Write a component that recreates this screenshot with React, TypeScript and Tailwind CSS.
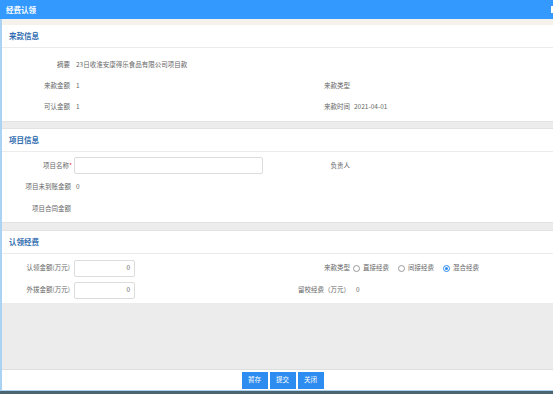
import React from "react";

const font = { fontFamily: '"Noto Sans CJK SC", "Noto Sans", sans-serif' };

function SectionTitle({ title }: { title: string }) {
  return (
    <div className="flex h-[23px] items-center border-b border-[#ececec] bg-white px-[7px]">
      <span className="text-[7.5px] font-bold text-[#2f6db0]">{title}</span>
    </div>
  );
}

function Label({ text, w = "w-[68px]", required = false }: { text: string; w?: string; required?: boolean }) {
  return (
    <div className={`${w} shrink-0 text-right text-[6.5px] text-[#666]`}>
      {text}
      {required && <span className="text-[#e53935]">*</span>}
    </div>
  );
}

function Radio({ checked = false }: { checked?: boolean }) {
  return (
    <span
      className={`flex h-[7px] w-[7px] items-center justify-center rounded-full border ${
        checked ? "border-[#2d8cf0]" : "border-[#999]"
      } bg-white`}
    >
      {checked && <span className="h-[3px] w-[3px] rounded-full bg-[#2d8cf0]" />}
    </span>
  );
}

function NumInput() {
  return (
    <div className="flex h-[17px] w-[61px] items-center justify-end rounded-[2px] border border-[#dcdcdc] bg-white px-[4px] text-[6.5px] text-[#666]">
      0
    </div>
  );
}

export default function App() {
  return (
    <div style={font} className="relative flex h-[394px] w-[553px] flex-col overflow-hidden bg-white">
      <div className="flex h-[19px] shrink-0 items-center justify-between bg-[#3399ff] pl-[6px]">
        <span className="text-[7.5px] font-bold text-white">经费认领</span>
        <span className="h-[7px] w-[2px] bg-white" />
      </div>

      <div className="flex flex-1 flex-col border-l-2 border-[#a9d2f3]">
        <div className="h-[6px] bg-[#f4f2eb]" />

        {/* 来款信息 */}
        <SectionTitle title="来款信息" />
        <div className="bg-white pb-[4px] pt-[6px]">
          <div className="flex h-[21px] items-center gap-[6px]">
            <Label text="摘要" />
            <span className="text-[6.5px] text-[#666]">23日收淮安康得乐食品有限公司项目款</span>
          </div>
          <div className="flex h-[21px] items-center">
            <div className="flex w-[276px] items-center gap-[6px]">
              <Label text="来款金额" />
              <span className="text-[6.5px] text-[#666]">1</span>
            </div>
            <div className="flex items-center gap-[4px]">
              <Label text="来款类型" w="w-[72px]" />
            </div>
          </div>
          <div className="flex h-[21px] items-center">
            <div className="flex w-[276px] items-center gap-[6px]">
              <Label text="可认金额" />
              <span className="text-[6.5px] text-[#666]">1</span>
            </div>
            <div className="flex items-center gap-[4px]">
              <Label text="来款时间" w="w-[72px]" />
              <span className="text-[6.5px] text-[#666]">2021-04-01</span>
            </div>
          </div>
        </div>

        <div className="h-[8px] border-y border-[#e2e2e2] bg-[#ececec]" />

        {/* 项目信息 */}
        <SectionTitle title="项目信息" />
        <div className="bg-white pb-[2px] pt-[3px]">
          <div className="flex h-[21px] items-center">
            <div className="flex w-[276px] items-center gap-[2px]">
              <Label text="项目名称" w="w-[70px]" required />
              <div className="h-[17px] w-[189px] rounded-[2px] border border-[#dcdcdc] bg-white" />
            </div>
            <div className="flex items-center">
              <Label text="负责人" w="w-[72px]" />
            </div>
          </div>
          <div className="flex h-[22px] items-center gap-[5px]">
            <Label text="项目未到账金额" w="w-[69px]" />
            <span className="text-[6.5px] text-[#666]">0</span>
          </div>
          <div className="flex h-[22px] items-center">
            <Label text="项目合同金额" w="w-[69px]" />
          </div>
        </div>

        <div className="h-[9px] border-y border-[#e2e2e2] bg-[#ececec]" />

        {/* 认领经费 */}
        <SectionTitle title="认领经费" />
        <div className="bg-white pb-[2px] pt-[3px]">
          <div className="flex h-[22px] items-center">
            <div className="flex w-[276px] items-center gap-[4px]">
              <Label text="认领金额(万元)" />
              <NumInput />
            </div>
            <div className="flex items-center gap-[3px] text-[6.5px] text-[#666]">
              <Label text="来款类型" w="w-[72px]" />
              <Radio />
              <span className="mr-[6px]">直接经费</span>
              <Radio />
              <span className="mr-[6px]">间接经费</span>
              <Radio checked />
              <span>混合经费</span>
            </div>
          </div>
          <div className="flex h-[22px] items-center">
            <div className="flex w-[276px] items-center gap-[4px]">
              <Label text="外拨金额(万元)" />
              <NumInput />
            </div>
            <div className="flex items-center gap-[6px] text-[6.5px] text-[#666]">
              <Label text="留校经费（万元）" w="w-[72px]" />
              <span>0</span>
            </div>
          </div>
        </div>

        <div className="flex-1 border-b border-[#dedede] bg-[#ececec]" />

        <div className="flex h-[20px] shrink-0 items-center justify-center gap-[2px] bg-white pl-[10px]">
          {["暂存", "提交", "关闭"].map((b) => (
            <button
              key={b}
              className="flex h-[17px] w-[26px] items-center justify-center bg-[#2d8cf0] text-[6.5px] text-white"
            >
              {b}
            </button>
          ))}
        </div>
      </div>

      <div className="h-[1px] shrink-0 bg-[#a9d2f3]" />
      <div className="h-[3px] shrink-0 bg-[#4a6470]" />
    </div>
  );
}
